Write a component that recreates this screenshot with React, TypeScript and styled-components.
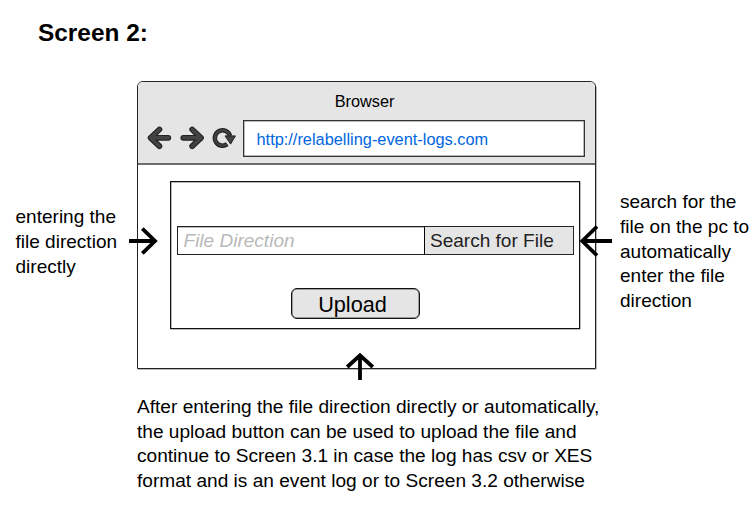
import React from "react";
import styled, { createGlobalStyle } from "styled-components";

const GlobalStyle = createGlobalStyle`
  * { box-sizing: border-box; }
  body {
    margin: 0;
    background: #fff;
    color: #000;
    font-family: "Liberation Sans", Arial, sans-serif;
    overflow: hidden;
  }
`;

const Page = styled.main`
  position: relative;
  width: 756px;
  height: 523px;
`;

const Title = styled.h1`
  margin: 0;
  height: 81px;
  padding: 18px 0 0 38px;
  font-size: 24.4px;
  line-height: 30px;
`;

const Stage = styled.div`
  display: grid;
  grid-template-columns: 137px 460px 1fr;
  height: 289px;
`;

const Note = styled.p<{ $top: number; $left: number }>`
  margin: 0;
  padding: ${(p) => p.$top}px 0 0 ${(p) => p.$left}px;
  font-size: 19.05px;
  line-height: 24.8px;
  white-space: nowrap;
`;

const BrowserFrame = styled.section`
  display: flex;
  flex-direction: column;
  width: 459px;
  height: 288px;
  border: 1px solid #222;
  border-radius: 6px 6px 0 0;
  box-shadow: 0.5px 0.5px 0 0 #777;
  overflow: hidden;
`;

const BrowserHeader = styled.header`
  height: 83px;
  flex: none;
  background: #e5e5e5;
  border-bottom: 2px solid #6c6c6c;
`;

const BrowserTitle = styled.div`
  height: 38px;
  padding-top: 10px;
  text-align: center;
  font-size: 16.3px;
  line-height: 19px;
  padding-right: 4px;
`;

const Toolbar = styled.div`
  display: flex;
  align-items: center;
  padding-left: 10px;
`;

const NavIcons = styled.svg`
  flex: none;
  width: 95px;
  height: 36px;
  overflow: visible;
`;

const AddressBar = styled.div`
  width: 342px;
  height: 37px;
  padding-left: 12.5px;
  border: 1px solid #333;
  box-shadow: inset 0 0 0 0.5px #777;
  background: #fff;
  color: #0066e0;
  font-size: 16.35px;
  line-height: 37px;
`;

const Panel = styled.div`
  display: flex;
  flex-direction: column;
  align-items: flex-start;
  width: 410px;
  height: 148px;
  margin: 16px 0 0 32px;
  padding: 44px 0 0 6px;
  border: 1px solid #111;
  box-shadow: 0.5px 0.5px 0 0 #777, inset 0.5px 0.5px 0 0 #777;
`;

const FileRow = styled.div`
  display: flex;
  width: 397px;
  height: 29px;
  border: 1px solid #222;
  box-shadow: inset 0 0.5px 0 0 #777;
  font-size: 19.05px;
  line-height: 27px;
`;

const FileField = styled.div`
  width: 247px;
  padding-left: 5.5px;
  border-right: 1px solid #000;
  color: #b9b9b9;
  font-style: italic;
`;

const SearchButton = styled.div`
  flex: 1;
  padding-left: 5px;
  background: #e5e5e5;
  color: #222;
`;

const UploadButton = styled.div`
  width: 129px;
  height: 31px;
  margin: 33px 0 0 114px;
  border: 1.5px solid #111;
  border-radius: 6px;
  background: #e5e5e5;
  box-shadow: inset 0 0 0 0.5px #555;
  text-align: center;
  padding-right: 6px;
  font-size: 21.7px;
  line-height: 31px;
`;

const Caption = styled.p`
  margin: 25px 0 0 137px;
  font-size: 19.1px;
  line-height: 24.6px;
  white-space: nowrap;
`;

/* Pointer arrows lie over the frames they refer to. */
const Pointer = styled.svg<{ $x: number; $y: number }>`
  position: absolute;
  left: ${(p) => p.$x}px;
  top: ${(p) => p.$y}px;
  fill: none;
  stroke: #000;
  stroke-width: 3.8;
`;

const backPath = "M159.4 129 150.6 137.3l8.8 8.4M151 137.3h17.3";
const forwardPath = "M192.2 129l8.8 8.3-8.8 8.4M200.6 137.3h-17.3";
const reloadPath = "M227.2 143.6A7.7 7.7 0 1 1 230 135.4";

export default function App() {
  return (
    <Page>
      <GlobalStyle />
      <Title>Screen 2:</Title>
      <Stage>
        <Note $top={124} $left={15.5}>
          entering the<br />file direction<br />directly
        </Note>
        <BrowserFrame>
          <BrowserHeader>
            <BrowserTitle>Browser</BrowserTitle>
            <Toolbar>
              <NavIcons viewBox="148 120.5 95 36" fill="none">
                <g strokeLinecap="round" strokeLinejoin="round">
                  <path d={backPath} stroke="#222" strokeWidth="5.8" />
                  <path d={backPath} stroke="#424242" strokeWidth="3.6" />
                  <path d={forwardPath} stroke="#222" strokeWidth="5.8" />
                  <path d={forwardPath} stroke="#424242" strokeWidth="3.6" />
                </g>
                <path d={reloadPath} stroke="#222" strokeWidth="4.5" />
                <path d={reloadPath} stroke="#424242" strokeWidth="2.3" />
                <path d="M225 135.4 235.4 135.4 230.6 143.6Z" fill="#424242" stroke="#222" />
              </NavIcons>
              <AddressBar>http://relabelling-event-logs.com</AddressBar>
            </Toolbar>
          </BrowserHeader>
          <Panel>
            <FileRow>
              <FileField>File Direction</FileField>
              <SearchButton>Search for File</SearchButton>
            </FileRow>
            <UploadButton>Upload</UploadButton>
          </Panel>
        </BrowserFrame>
        <Note $top={109} $left={23}>
          search for the<br />file on the pc to<br />automatically<br />enter the file<br />direction
        </Note>
      </Stage>
      <Caption>
        After entering the file direction directly or automatically,<br />
        the upload button can be used to upload the file and<br />
        continue to Screen 3.1 in case the log has csv or XES<br />
        format and is an event log or to Screen 3.2 otherwise
      </Caption>
      <Pointer $x={129} $y={225} width="30" height="32">
        <path d="M0 16h27M13.3 3.7 26 16 13.3 28.3" />
      </Pointer>
      <Pointer $x={579} $y={223} width="33" height="36">
        <path d="M33 18H3M18 3.5 3.3 18 18 32.5" />
      </Pointer>
      <Pointer $x={345} $y={351} width="30" height="29">
        <path d="M15 29V4M2.2 16 15 4.3 27.8 16" />
      </Pointer>
    </Page>
  );
}
